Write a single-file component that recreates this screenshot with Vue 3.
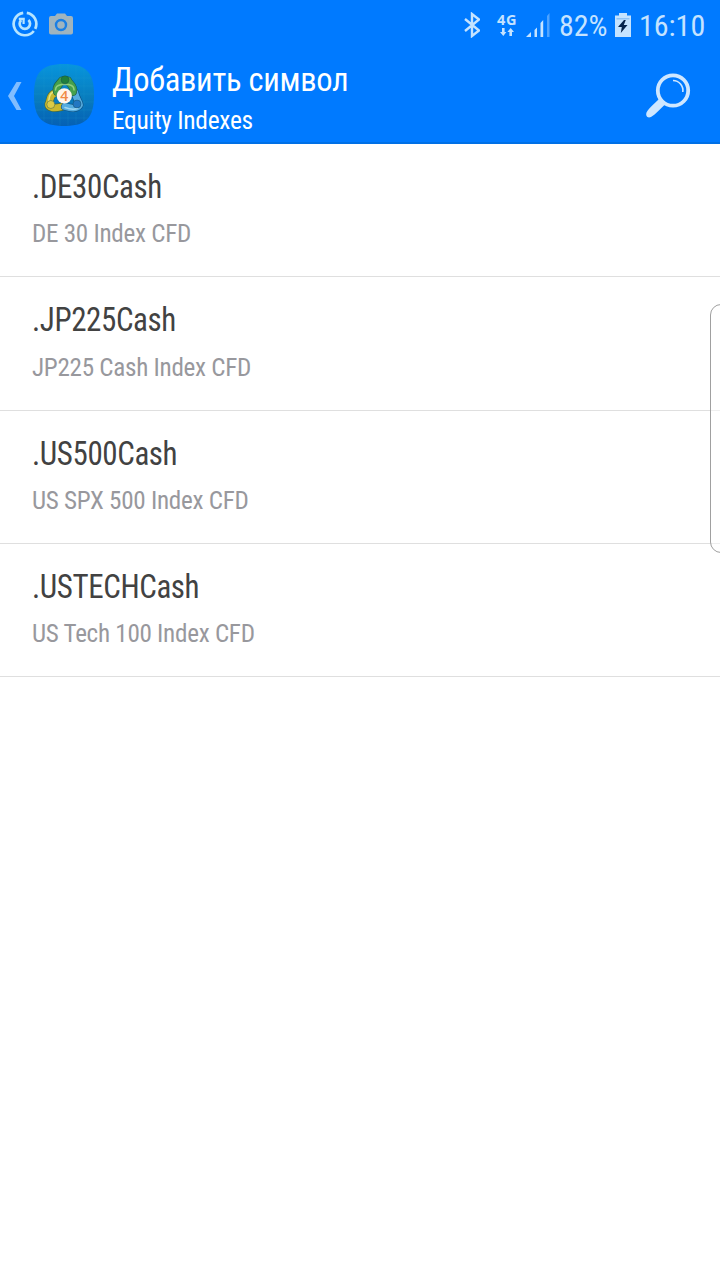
<template>
  <div class="screen">
    <header class="header">
      <div class="status-bar">
        <div class="status-left">
          <svg class="sync-icon" viewBox="0 0 26 26">
            <path d="M11.2 1.8A11.3 11.3 0 1 0 21.8 20" />
            <path d="M14.8 1.8A11.3 11.3 0 0 1 23.2 17.8" />
            <path d="M9.2 9A5.2 5.2 0 1 0 16.4 8.9" />
            <path class="tip" d="M11.6 13V7.8M6.8 7.9H12.8" />
          </svg>
          <svg class="camera-icon" viewBox="0 0 24 22">
            <path
              d="M2 3H6L8 .5H16L18 3H22Q24 3 24 5V19.5Q24 21.5 22 21.5H2Q0 21.5 0 19.5V5Q0 3 2 3Z"
            />
            <circle cx="12" cy="12" r="5" />
          </svg>
        </div>
        <div class="status-right">
          <svg class="bluetooth-icon" viewBox="0 0 16 26">
            <path d="M1 7L15 18.5L8 24V2L15 7.5L1 19" />
          </svg>
          <div class="network">
            <span class="network-type">4G</span>
            <svg class="arrows-icon" viewBox="0 0 14 8">
              <path d="M2 0H4.6V4H6.4L3.3 8L0 4H2Z" />
              <path d="M9.4 8H12V4H14L10.7 0L7.4 4H9.4Z" />
            </svg>
          </div>
          <svg class="signal-icon" viewBox="0 0 24 24">
            <path d="M0 24L5 19V24Z" />
            <path d="M8.5 17L11 14.5V24H8.5Z" />
            <path d="M14.5 10L17.2 7V24H14.5Z" />
            <path class="weak" d="M21 3L23.5 0V24H21Z" />
          </svg>
          <span class="battery-text">82%</span>
          <svg class="battery-icon" viewBox="0 0 16 24">
            <path class="cell" d="M4 0H12V2.5H16V24H0V2.5H4Z" />
            <path class="shade" d="M1.5 5H14.5V6.5H1.5Z" />
            <path class="bolt" d="M9 7L3 14H6.8L5.8 20L12.5 12H8.8L10.8 7Z" />
          </svg>
          <span class="clock">16:10</span>
        </div>
      </div>

      <div class="toolbar">
        <svg class="back-icon" viewBox="0 0 14 28">
          <path d="M8.5 0H13.5L6 14L13.5 28H8.5L0 14Z" />
        </svg>
        <svg class="app-icon" viewBox="0 0 60 62">
          <defs>
            <linearGradient id="tile" x1="0" y1="0" x2="0" y2="1">
              <stop offset="0" stop-color="#0795dd" />
              <stop offset="0.55" stop-color="#087cbd" />
              <stop offset="1" stop-color="#0560b5" />
            </linearGradient>
          </defs>
          <path
            class="tile"
            d="M30 0C52 0 60 8 60 31C60 54 52 62 30 62C8 62 0 54 0 31C0 8 8 0 30 0Z"
          />
          <path
            class="grid"
            d="M10 5V57M18 2V60M26 0V62M34 0V62M42 2V60M50 5V57M3 14H57M1 22H59M0 30H60M0 38H60M1 46H59M6 54H54"
          />
          <g class="yellow">
            <path class="rim" d="M21 29C15 31 17 36 14.5 40C14 44 20 44.5 27 43" />
            <path class="fill" d="M21 29C15 31 17 36 14.5 40C14 44 20 44.5 27 43" />
            <path class="gloss" d="M20 27.5C14 30 16 34 14.5 37" />
            <circle class="ball" cx="16.8" cy="40.5" r="4" />
          </g>
          <g class="blue">
            <path class="rim" d="M41 29C42 35 45 37 45.5 41C43 45 37 44.5 31 42.5" />
            <path class="fill" d="M41 29C42 35 45 37 45.5 41C43 45 37 44.5 31 42.5" />
            <path class="gloss" d="M43.5 44.5C39 46 35 45 31 43.5" />
            <circle class="ball" cx="43" cy="40" r="4" />
          </g>
          <g class="green">
            <path class="rim" d="M23 28C21 22 26 20 28 16.5H34C35 20 41 22 39 28" />
            <path class="fill" d="M23 28C21 22 26 20 28 16.5H34C35 20 41 22 39 28" />
            <path class="gloss" d="M21.5 26C21.5 21 26 21 27.5 20.5H34.5C36 21 40 21 40 26" />
            <circle class="ball" cx="31" cy="15.8" r="4" />
          </g>
          <circle class="disc" cx="30.3" cy="31.8" r="7.6" />
          <text class="four" x="30.3" y="37">4</text>
        </svg>
        <div class="titles">
          <div class="title"><span class="condensed">Добавить символ</span></div>
          <div class="subtitle"><span class="condensed">Equity Indexes</span></div>
        </div>
        <svg class="search-icon" viewBox="0 0 46 46">
          <circle cx="28" cy="17.5" r="15.2" />
          <path class="shine" d="M28 7.5A10 10 0 0 1 37.8 19" />
          <path
            class="handle"
            d="M14.5 25.5L20.5 31C15 36 11 41 6 44C2 45.5 .5 42.5 1.5 39.5C4 35 10 30 14.5 25.5Z"
          />
        </svg>
      </div>
    </header>

    <ul class="symbols">
      <li v-for="symbol in symbols" :key="symbol.name" class="symbol">
        <div class="name"><span class="condensed">{{ symbol.name }}</span></div>
        <div class="description">
          <span class="condensed">{{ symbol.description }}</span>
        </div>
      </li>
    </ul>

    <div class="edge-handle"></div>
  </div>
</template>

<script setup>
import { ref } from "vue";

const symbols = ref([
  { name: ".DE30Cash", description: "DE 30 Index CFD" },
  { name: ".JP225Cash", description: "JP225 Cash Index CFD" },
  { name: ".US500Cash", description: "US SPX 500 Index CFD" },
  { name: ".USTECHCash", description: "US Tech 100 Index CFD" },
]);
</script>

<style>
body {
  margin: 0;
  background: #fff;
}
</style>

<style scoped>
.screen {
  position: relative;
  width: 720px;
  height: 1280px;
  overflow: hidden;
  background: #fff;
  font-family: "Roboto Condensed", Roboto, sans-serif;
  font-stretch: 75%;
}

.condensed {
  display: inline-block;
  white-space: nowrap;
  letter-spacing: -0.3px;
  transform: scaleX(0.975);
  transform-origin: 0 0;
}

.header {
  box-sizing: border-box;
  height: 144px;
  background: #007aff;
  border-bottom: 2px solid #0070e6;
}

.status-bar {
  display: flex;
  justify-content: space-between;
  height: 48px;
  padding: 0 15px 0 12px;
  color: #c5e3ff;
}

.status-left,
.status-right {
  display: flex;
  align-items: center;
}

.sync-icon {
  width: 26px;
  height: 26px;
  fill: none;
  stroke: #b5e4ff;
  stroke-width: 2.7;
}

.sync-icon .tip {
  stroke-width: 2.2;
}

.camera-icon {
  width: 24px;
  height: 22px;
  margin-left: 11px;
  fill: #9fb4bf;
}

.camera-icon circle {
  fill: none;
  stroke: #1a7fe5;
  stroke-width: 2.4;
}

.bluetooth-icon {
  width: 16px;
  height: 26px;
  margin-top: 1px;
  fill: none;
  stroke: #c5e3ff;
  stroke-width: 2.4;
}

.network {
  display: flex;
  flex-direction: column;
  align-items: center;
  width: 20px;
  margin-left: 17px;
}

.network-type {
  font: bold 14.5px/14px "Open Sans", sans-serif;
  letter-spacing: 0.5px;
}

.arrows-icon {
  width: 14px;
  height: 8px;
  margin-top: 1px;
  fill: #c5e3ff;
}

.signal-icon {
  width: 24px;
  height: 24px;
  margin: 1px 0 0 9px;
  fill: #c5e3ff;
}

.signal-icon .weak {
  fill: #4fa3ff;
}

.battery-text {
  width: 47px;
  margin-left: 9px;
  padding-top: 3px;
  font-size: 30px;
  line-height: 50px;
}

.battery-icon {
  width: 16px;
  height: 24px;
  margin: 1px 0 0 9px;
}

.battery-icon .cell {
  fill: #c5e3ff;
}

.battery-icon .shade {
  fill: #8fc2f5;
}

.battery-icon .bolt {
  fill: #06244d;
}

.clock {
  width: 66px;
  margin-left: 8px;
  padding-top: 3px;
  font-size: 30px;
  line-height: 50px;
}

.toolbar {
  display: flex;
  align-items: center;
  height: 96px;
  padding: 0 29px 0 8px;
}

.back-icon {
  width: 14px;
  height: 28px;
  fill: #80bdff;
}

.app-icon {
  width: 60px;
  height: 62px;
  margin: 0 0 2px 12px;
}

.tile {
  fill: url(#tile);
}

.grid {
  fill: none;
  stroke: #28a5d8;
  stroke-width: 0.5;
  opacity: 0.35;
}

.rim,
.fill,
.gloss {
  fill: none;
  stroke-linecap: round;
  stroke-linejoin: round;
}

.rim {
  stroke-width: 8;
}

.fill {
  stroke-width: 6.8;
}

.gloss {
  stroke-width: 1.5;
  opacity: 0.75;
}

.green .rim {
  stroke: #1a5a4c;
}

.green .fill {
  stroke: #45a04c;
}

.green .gloss {
  stroke: #a9dc8c;
}

.green .ball {
  fill: #1f7f3c;
}

.yellow .rim {
  stroke: #4a6a3a;
}

.yellow .fill {
  stroke: #c9b82e;
}

.yellow .gloss {
  stroke: #eff09a;
}

.yellow .ball {
  fill: #dccb45;
}

.blue .rim {
  stroke: #0c4f80;
}

.blue .fill {
  stroke: #55acdf;
}

.blue .gloss {
  stroke: #b5e6fa;
}

.blue .ball {
  fill: #2277c2;
}

.ball {
  stroke: rgba(20, 70, 80, 0.5);
  stroke-width: 0.8;
}

.disc {
  fill: #fff5ea;
}

.four {
  font: 600 14px "Open Sans", sans-serif;
  text-anchor: middle;
  fill: #f08a45;
}

.titles {
  flex: 1;
  margin-left: 18px;
  padding-top: 1px;
  color: #fff;
}

.title {
  font-size: 34px;
  line-height: 40px;
}

.title .condensed {
  transform: scaleX(0.957);
}

.subtitle {
  margin-top: 5px;
  font-size: 26.5px;
  line-height: 31px;
}

.subtitle .condensed {
  transform: scaleX(0.96);
}

.search-icon {
  width: 46px;
  height: 46px;
  fill: none;
  stroke: #cfe7ff;
  stroke-width: 3.8;
}

.search-icon .shine {
  stroke-width: 1.6;
}

.search-icon .handle {
  fill: #cfe7ff;
  stroke: none;
}

.symbols {
  margin: 0;
  padding: 0;
  list-style: none;
}

.symbol {
  box-sizing: border-box;
  height: 133.33px;
  padding: 24px 32px 0;
  border-bottom: 1px solid #dfdfdf;
}

.name {
  color: #424242;
  font-size: 32.5px;
  line-height: 38px;
}

.name .condensed {
  letter-spacing: -0.4px;
  transform: scaleX(0.953);
}

.description {
  margin-top: 11.4px;
  color: #98989d;
  font-size: 26.5px;
  line-height: 31px;
}

.description .condensed {
  transform: scaleX(0.948);
}

/* edge panel handle floating over the list */
.edge-handle {
  position: absolute;
  top: 304px;
  right: -12px;
  box-sizing: border-box;
  width: 22px;
  height: 249px;
  border: 1px solid #a0a0a0;
  border-radius: 12px;
  background: rgba(255, 255, 255, 0.5);
}
</style>
